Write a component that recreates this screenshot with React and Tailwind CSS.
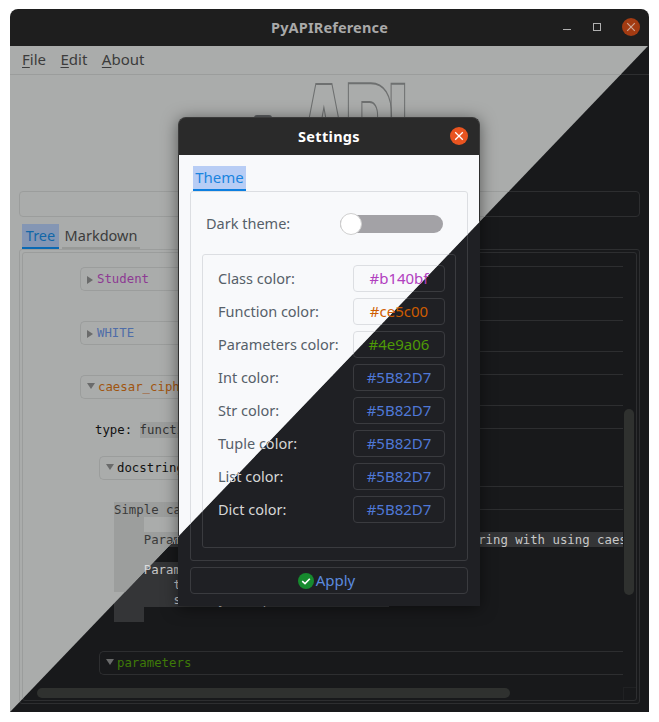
const sans = "font-['Noto_Sans',sans-serif]";
const mono = "font-['DejaVu_Sans_Mono',monospace]";

const light = {
  bg: "bg-[#aaacab]",
  line: "border-[#9b9d9c]",
  menu: "text-[#3c3c3c]",
  tabOn: "bg-[#8496b4] text-[#1267a8] border-[#0a69b4]",
  tabOff: "text-[#3c3c3c] border-[#979997]",
  dlg: "bg-[#f8f9fb]",
  dlgLine: "border-[#dcdee2]",
  dlgText: "text-[#566069]",
  dtab: "bg-[#b8cdf5] text-[#1a84e0] border-[#0d7fe0]",
  scroll: "bg-[#9a9c9b]",
  corner: "border-[#a3a5a4]",
  apply: "text-[#1a84e0]",
};
const dark = {
  bg: "bg-[#18191b]",
  line: "border-[#2d2e30]",
  menu: "text-[#cccccc]",
  tabOn: "bg-[#2a3a55] text-[#3584e4] border-[#0a69b4]",
  tabOff: "text-[#cccccc] border-[#333333]",
  dlg: "bg-[#1f2024]",
  dlgLine: "border-[#3a3b3f]",
  dlgText: "text-[#d6d6d6]",
  dtab: "bg-[#2a3a55] text-[#3584e4] border-[#0d7fe0]",
  scroll: "bg-[#2f312f]",
  corner: "border-[#202123]",
  apply: "text-[#5b8ade]",
};

const colors = [
  ["Class color:", "#b140bf", "text-[#b140bf]"],
  ["Function color:", "#ce5c00", "text-[#ce5c00]"],
  ["Parameters color:", "#4e9a06", "text-[#4e9a06]"],
  ["Int color:", "#5B82D7", "text-[#4f78d6]"],
  ["Str color:", "#5B82D7", "text-[#4f78d6]"],
  ["Tuple color:", "#5B82D7", "text-[#4f78d6]"],
  ["List color:", "#5B82D7", "text-[#4f78d6]"],
  ["Dict color:", "#5B82D7", "text-[#4f78d6]"],
];

function Closed() {
  return (
    <svg width="8" height="10" viewBox="0 0 8 10" className="shrink-0">
      <path d="M1 1 L7 5 L1 9 Z" fill="#6a6b6b" />
    </svg>
  );
}
function Open() {
  return (
    <svg width="10" height="8" viewBox="0 0 10 8" className="shrink-0 -mt-[3px] -mr-px">
      <path d="M1 1 L9 1 L5 7 Z" fill="#6a6b6b" />
    </svg>
  );
}

function Dialog({ t }) {
  return (
    <div className="absolute left-[168px] top-[71px] w-[302px] h-[489px] flex flex-col rounded-t-[8px] shadow-[0_2px_16px_rgba(0,0,0,0.5)] z-10">
      <div className="h-[38px] shrink-0 bg-[#2a2a2a] rounded-t-[8px] relative flex items-center justify-center border-t border-x border-[#3a3a3a]">
        <span className={`${sans} text-[14.5px] font-bold text-white tracking-[0.3px]`}>Settings</span>
        <div className="absolute right-[11px] top-[9px] w-[18px] h-[18px] rounded-full bg-[#e95420] flex items-center justify-center">
          <svg width="10" height="10" viewBox="0 0 10 10"><path d="M1.2 1.2 L8.8 8.8 M8.8 1.2 L1.2 8.8" stroke="#fff" strokeWidth="1.3" /></svg>
        </div>
      </div>
      <div className={`flex-1 flex flex-col pl-[11px] pr-[11px] pt-[11px] ${t.dlg} border-x ${t === light ? "border-[#2e2e2e]" : "border-[#1f2024]"} ${sans}`}>
        <div className={`ml-[3px] w-[53px] h-[25px] border-b-2 text-[15px] leading-[22px] text-center ${t.dtab}`}>Theme</div>
        <div className={`h-[370px] border rounded-[3px] px-[11px] ${t.dlgLine} ${t.dlgText} text-[14.5px]`}>
          <div className="mt-[23px] h-[18px] flex items-center justify-between pl-[4px] pr-[13px]">
            <span>Dark theme:</span>
            <div className="w-[103px] h-[18px] rounded-full bg-[#a3a2a6] relative">
              <div className="absolute left-0 -top-[2px] w-[22px] h-[22px] rounded-full bg-white border border-[#cfcfcf]" />
            </div>
          </div>
          <div className={`mt-[21px] h-[294px] border rounded-[3px] pl-[15px] pr-[10px] pt-[10px] flex flex-col gap-[6px] ${t.dlgLine}`}>
            {colors.map(([label, value, c]) => (
              <div key={label} className="h-[27px] flex items-center justify-between">
                <span>{label}</span>
                <div className={`w-[92px] h-[27px] border rounded-[4px] flex items-center justify-center text-[15px] ${t.dlgLine} ${c}`}>{value}</div>
              </div>
            ))}
          </div>
        </div>
        <div className={`mt-[6px] h-[27px] border rounded-[4px] flex items-center justify-center gap-[2px] pr-[5px] text-[15px] ${t.dlgLine} ${t.apply}`}>
          <svg width="16" height="16" viewBox="0 0 16 16">
            <circle cx="8" cy="8" r="8" fill="#168a2e" />
            <path d="M4.2 8.2 L7 10.6 L11.8 5.8" stroke="#fff" strokeWidth="1.6" fill="none" />
          </svg>
          <span>Apply</span>
        </div>
      </div>
    </div>
  );
}

function DocRow({ text, cls }) {
  return <div className={`h-[15px] w-fit leading-[17px] whitespace-pre ${cls}`}>{text}</div>;
}

function LightTree() {
  const box = "h-[24px] ml-[57px] border border-r-0 rounded-l-[5px] border-[#9b9d9c] flex items-center pl-[5px] pt-px gap-[3px]";
  const rowBg = "bg-[#9c9e9d] text-[#3a3a3a]";
  return (
    <div className={`flex flex-col text-[12.35px] ${mono}`}>
      <div className={`mt-[14px] ${box}`}><Closed /><span className="text-[#8d3a93]">Student</span></div>
      <div className={`mt-[30px] ${box}`}><Closed /><span className="text-[#4f6da8]">WHITE</span></div>
      <div className={`mt-[30px] ${box}`}><Open /><span className="text-[#a05510]">caesar_cipher</span></div>
      <div className="mt-[23px] ml-[72px] h-[16px] leading-[16px] flex text-[#111]">
        <span className="whitespace-pre">type: </span><span className="bg-[#9c9e9d] text-[#333]">function</span>
      </div>
      <div className={`mt-[18px] ${box} ml-[76px]`}><Open /><span className="text-[#111]">docstring</span></div>
      <div className="mt-[22px] ml-[91px]">
        <DocRow cls={rowBg} text="Simple caesar cipher implementation here" />
        <DocRow cls={rowBg} text="    " />
        <DocRow cls={rowBg} text="    Parameters used to encrypt and decrypt the string with using caesar" />
        <DocRow cls={rowBg} text="                     " />
        <DocRow cls="bg-[#9c9e9d] text-[#ddd]" text="    Parameters:" />
        <DocRow cls={rowBg} text="        text (str): string to be encrypted" />
      </div>
    </div>
  );
}

function DarkTree() {
  const box = "ml-[57px] border border-r-0 rounded-l-[5px] border-[#2d2e30]";
  const rowBg = "bg-[#343537] text-[#c8c8c8]";
  return (
    <div className={`flex flex-col text-[12.35px] ${mono}`}>
      <div className={`mt-[13px] h-[32px] ${box}`} />
      <div className={`mt-[22px] h-[32px] ${box}`} />
      <div className={`mt-[22px] h-[32px] ${box}`} />
      <div className={`mt-[22px] h-[58px] border-b-0 ${box}`} />
      <div className={`h-[24px] ${box}`} />
      <div className="mt-[22px] ml-[91px] h-[90px]">
        <DocRow cls={rowBg} text="    Parameters used to encrypt and decrypt the string with using caesar" />
        <DocRow cls={rowBg} text="    " />
        <DocRow cls={rowBg} text="    Parameters:                     " />
        <DocRow cls={rowBg} text="        text (str): string to be done" />
        <DocRow cls={rowBg} text="        start y: lamp for the old val" />
        <DocRow cls={rowBg} text="    " />
      </div>
      <div className="mt-[29px] h-[24px] ml-[76px] border border-r-0 rounded-l-[5px] border-[#2d2e30] flex items-center pl-[5px] pt-px gap-[3px]">
        <Open /><span className="text-[#3e7a08]">parameters</span>
      </div>
    </div>
  );
}

function Body({ t, isLight }) {
  return (
    <div className={`w-[639px] h-[666px] flex flex-col ${t.bg} ${sans}`}>
      <div className={`h-[29px] shrink-0 border-b flex items-center pl-[12px] pb-[2px] gap-[14.5px] text-[15px] ${t.line} ${t.menu}`}>
        <span><span className="underline underline-offset-2">F</span>ile</span>
        <span><span className="underline underline-offset-2">E</span>dit</span>
        <span><span className="underline underline-offset-2">A</span>bout</span>
      </div>
      <div className="h-[116px] shrink-0 overflow-hidden flex items-start pl-[244px] gap-[24px]">
        {isLight && (
          <>
            <div className="mt-[40px] w-[18px] h-[3px] rounded-t-full bg-[#5c5e60]" />
            <span className="block -mt-[7px] origin-top-left scale-y-[1.9] tracking-[-10px] font-['DejaVu_Sans',sans-serif] font-bold text-[72px] leading-[72px] text-transparent [-webkit-text-stroke:1px_#6e7070]">API</span>
          </>
        )}
      </div>
      <div className={`mx-[9px] h-[26px] shrink-0 border rounded-[4px] ${t.line}`} />
      <div className="mt-[7px] ml-[12px] h-[25px] shrink-0 flex gap-[3px] text-[14.5px]">
        <div className={`w-[37px] border-b-2 text-center leading-[23px] ${t.tabOn}`}>Tree</div>
        <div className={`w-[78px] border-b-2 text-center leading-[23px] ${t.tabOff}`}>Markdown</div>
      </div>
      <div className={`mx-[9px] h-[455px] shrink-0 border rounded-[3px] p-[2px] ${t.line}`}>
        <div className={`h-full border rounded-[3px] relative overflow-hidden ${t.line}`}>
          <div className="w-[600px] h-[434px] overflow-hidden">
            {isLight ? <LightTree /> : <DarkTree />}
          </div>
          <div className={`absolute left-[601px] top-[156px] w-[10px] h-[186px] rounded-full ${t.scroll}`} />
          <div className={`absolute left-[14px] top-[435px] w-[473px] h-[10px] rounded-full ${t.scroll}`} />
          <div className={`absolute left-[600px] top-[434px] w-[13px] h-[13px] border-l border-t ${t.corner}`} />
        </div>
      </div>
      <Dialog t={t} />
    </div>
  );
}

export default function App() {
  return (
    <div className="w-[659px] h-[722px] bg-white pt-[9px] pl-[10px]">
      <div className="w-[639px] h-[703px] flex flex-col rounded-t-[8px] overflow-hidden">
        <div className={`h-[37px] shrink-0 bg-[#1e1e1e] relative flex items-center justify-center ${sans}`}>
          <span className="text-[14.5px] font-bold text-[#a9a9a9] tracking-[0.15px]">PyAPIReference</span>
          <div className="absolute left-[553px] top-[20px] w-[8px] h-px bg-[#b0b0b0]" />
          <div className="absolute left-[583px] top-[14px] w-[8px] h-[8px] border border-[#b0b0b0]" />
          <div className="absolute left-[612px] top-[9px] w-[18px] h-[18px] rounded-full bg-[#a33b12] flex items-center justify-center">
            <svg width="10" height="10" viewBox="0 0 10 10"><path d="M1.2 1.2 L8.8 8.8 M8.8 1.2 L1.2 8.8" stroke="#cfa898" strokeWidth="1.2" /></svg>
          </div>
        </div>
        <div className="relative h-[666px]">
          <Body t={dark} isLight={false} />
          <div className="absolute inset-0 z-20 [clip-path:polygon(0_0,638px_0,0_666px)]">
            <Body t={light} isLight={true} />
          </div>
        </div>
      </div>
    </div>
  );
}
